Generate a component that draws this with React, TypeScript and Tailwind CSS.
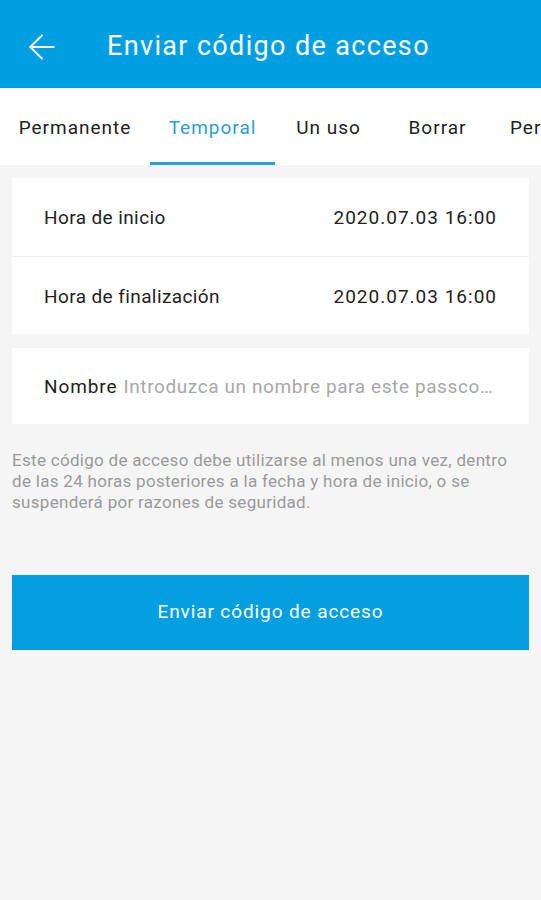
import { ArrowLeft } from "lucide-react";

const tabs = [
  { label: "Permanente", w: "w-[150px] justify-center" },
  { label: "Temporal", w: "w-[125px] justify-center", active: true },
  { label: "Un uso", w: "w-[107px] justify-center" },
  { label: "Borrar", w: "w-[111px] justify-center" },
  { label: "Personalizado", w: "w-[150px] justify-start pl-[17px]" },
];

export default function App() {
  return (
    <div
      className="min-h-[900px] w-[541px] overflow-hidden bg-[#f5f5f5]"
      style={{ fontFamily: "Roboto, 'Noto Sans', sans-serif" }}
    >
      <header className="flex h-[88px] items-center bg-[#019fe2] pt-[5px] text-white">
        <ArrowLeft className="ml-[22px] h-[40px] w-[40px]" strokeWidth={1.2} />
        <h1 className="ml-[45px] text-[27px] font-normal tracking-[1.35px]">Enviar código de acceso</h1>
      </header>

      <nav className="flex h-[77px] overflow-hidden bg-white pt-[3px]">
        {tabs.map((t) => (
          <div key={t.label} className={`${t.w} relative flex shrink-0 items-center`}>
            <span
              className={`whitespace-nowrap text-[19px] tracking-[1px] ${t.active ? "text-[#2b9fd8]" : "text-[#222]"}`}
            >
              {t.label}
            </span>
            {t.active && <span className="absolute bottom-0 left-0 h-[3px] w-full bg-[#2b9fd8]" />}
          </div>
        ))}
      </nav>

      <div className="px-[12px] pt-[13px]">
        <div className="bg-white">
          <div className="flex h-[78px] items-center justify-between px-[32px] pt-[3px] text-[19px] text-[#222]">
            <span className="tracking-[0.4px]">Hora de inicio</span>
            <span className="tracking-[1px]">2020.07.03 16:00</span>
          </div>
          <div className="h-px bg-[#eeeeee]" />
          <div className="flex h-[77px] items-center justify-between px-[32px] pt-[3px] text-[19px] text-[#222]">
            <span className="tracking-[0.4px]">Hora de finalización</span>
            <span className="tracking-[1px]">2020.07.03 16:00</span>
          </div>
        </div>

        <div className="mt-[14px] flex h-[76px] items-center bg-white pl-[32px] pr-[30px] pt-[3px] text-[19px]">
          <span className="shrink-0 tracking-[0.9px] text-[#222]">Nombre</span>
          <span className="ml-[6px] min-w-0 truncate tracking-[0.6px] text-[#a8a8a8]">
            Introduzca un nombre para este passcode
          </span>
        </div>

        <p className="mt-[26px] pr-[10px] text-[17px] leading-[21px] tracking-[0.3px] text-[#9a9a9a]">
          Este código de acceso debe utilizarse al menos una vez, dentro de las 24 horas posteriores a la fecha y hora
          de inicio, o se suspenderá por razones de seguridad.
        </p>

        <button className="mt-[62px] flex h-[75px] w-full items-center justify-center bg-[#039fe0] text-[19px] tracking-[0.9px] text-white">
          Enviar código de acceso
        </button>
      </div>
    </div>
  );
}
